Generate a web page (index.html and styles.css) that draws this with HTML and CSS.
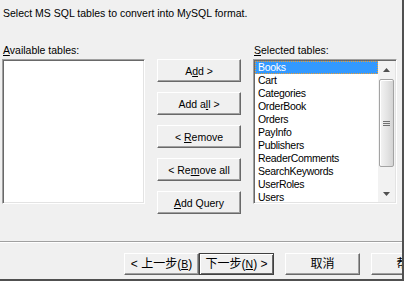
FILE: index.html
```html
<!DOCTYPE html>
<html lang="en">
<head>
  <meta charset="UTF-8" />
  <title>Select tables</title>
  <link rel="stylesheet" href="styles.css">
</head>
<body>
  <div class="window">
    <p class="intro">Select MS SQL tables to convert into MySQL format.</p>

    <div class="pickers">
      <div class="picker picker-left">
        <div class="picker-label"><u>A</u>vailable tables:</div>
        <div class="listbox"></div>
      </div>

      <div class="actions">
        <button class="btn">A<u>d</u>d &gt;</button>
        <button class="btn">Add a<u>l</u>l &gt;</button>
        <button class="btn">&lt; <u>R</u>emove</button>
        <button class="btn">&lt; Re<u>m</u>ove all</button>
        <button class="btn"><u>A</u>dd Query</button>
      </div>

      <div class="picker picker-right">
        <div class="picker-label"><u>S</u>elected tables:</div>
        <div class="listbox">
          <ul class="items">
            <li class="item selected">Books</li>
            <li class="item">Cart</li>
            <li class="item">Categories</li>
            <li class="item">OrderBook</li>
            <li class="item">Orders</li>
            <li class="item">PayInfo</li>
            <li class="item">Publishers</li>
            <li class="item">ReaderComments</li>
            <li class="item">SearchKeywords</li>
            <li class="item">UserRoles</li>
            <li class="item">Users</li>
          </ul>
          <div class="scrollbar">
            <div class="scroll-arrow">
              <svg width="7" height="4" viewBox="0 0 7 4"><polygon points="3.5,0 7,4 0,4" fill="#505050"/></svg>
            </div>
            <div class="scroll-thumb">
              <span class="grip"></span>
            </div>
            <div class="scroll-track"></div>
            <div class="scroll-arrow">
              <svg width="7" height="4" viewBox="0 0 7 4"><polygon points="0,0 7,0 3.5,4" fill="#505050"/></svg>
            </div>
          </div>
        </div>
      </div>
    </div>

    <div class="footer">
      <div class="wizard-nav">
        <button class="btn btn-nav">&lt; 上一步(<u>B</u>)</button>
        <button class="btn btn-nav btn-default">下一步(<u>N</u>) &gt;</button>
      </div>
      <button class="btn btn-nav">取消</button>
      <button class="btn btn-nav">帮助</button>
    </div>
  </div>
</body>
</html>
```

FILE: styles.css
```css
* {
  box-sizing: border-box;
  margin: 0;
  padding: 0;
}

body {
  background: #ffffff;
  font-family: "Liberation Sans", "Noto Sans CJK SC", sans-serif;
  font-size: 10.5px;
  color: #000;
}

.window {
  width: 404px;
  height: 281px;
  background: #f0f0f0;
  border-right: 2px solid #505050;
  border-bottom: 2px solid #505050;
  display: flex;
  flex-direction: column;
  overflow: hidden;
}

.intro {
  padding: 7px 0 0 3px;
  line-height: 13px;
}

.pickers {
  display: flex;
  align-items: flex-start;
  margin-top: 24px;
}

.picker-label {
  line-height: 13px;
  padding-left: 1px;
  margin-bottom: 2px;
}

.picker-left {
  margin-left: 2px;
  width: 143px;
}

.picker-right {
  margin-left: 12px;
  width: 144px;
}

.listbox {
  height: 145px;
  background: #fff;
  border: 1px solid;
  border-color: #a0a0a0 #fff #fff #a0a0a0;
  box-shadow: inset 1px 1px 0 #696969, inset -1px -1px 0 #e3e3e3;
  padding: 1px;
  display: flex;
  overflow: hidden;
}

.items {
  list-style: none;
  flex: 1;
  overflow: hidden;
}

.item {
  height: 13px;
  line-height: 13px;
  padding-left: 3px;
  letter-spacing: -0.3px;
  white-space: nowrap;
}

.item.selected {
  background: #3399ff;
  color: #fff;
  outline: 1px dotted #f0a030;
  outline-offset: -1px;
}

.scrollbar {
  width: 17px;
  display: flex;
  flex-direction: column;
  background: #f2f2f2;
}

.scroll-arrow {
  height: 17px;
  display: flex;
  align-items: center;
  justify-content: center;
}

.scroll-thumb {
  height: 88px;
  margin: 1px 1px 0;
  border: 1px solid #a3a3a3;
  border-radius: 2px;
  background: linear-gradient(to right, #f4f4f4, #e2e2e2 60%, #d4d4d4);
  box-shadow: inset 1px 1px 0 #fff;
  display: flex;
  align-items: center;
  justify-content: center;
}

.grip {
  width: 7px;
  height: 5px;
  background: repeating-linear-gradient(to bottom, #707070 0, #707070 1px, transparent 1px, transparent 2px);
}

.scroll-track {
  flex: 1;
}

.actions {
  display: flex;
  flex-direction: column;
  gap: 10px;
  width: 84px;
  margin-left: 12px;
  margin-top: 15px;
}

.btn {
  font: inherit;
  color: #000;
  height: 23px;
  background: #f0f0f0;
  border: 1px solid;
  border-color: #fff #696969 #696969 #fff;
  box-shadow: inset -1px -1px 0 #a0a0a0;
  white-space: nowrap;
  flex-shrink: 0;
}

.footer {
  margin-top: auto;
  border-top: 1px solid #a0a0a0;
  box-shadow: inset 0 1px 0 #fff;
  padding: 11px 0 4px 124px;
  display: flex;
  gap: 11px;
}

.wizard-nav {
  display: flex;
}

.btn-nav {
  width: 75px;
  height: 22px;
  font-size: 12px;
  line-height: 14px;
}

.btn-nav u {
  font-size: 10.5px;
}

.btn-default {
  border: 1px solid #404040;
  box-shadow: inset 1px 1px 0 #fff, inset -1px -1px 0 #696969;
}
```
